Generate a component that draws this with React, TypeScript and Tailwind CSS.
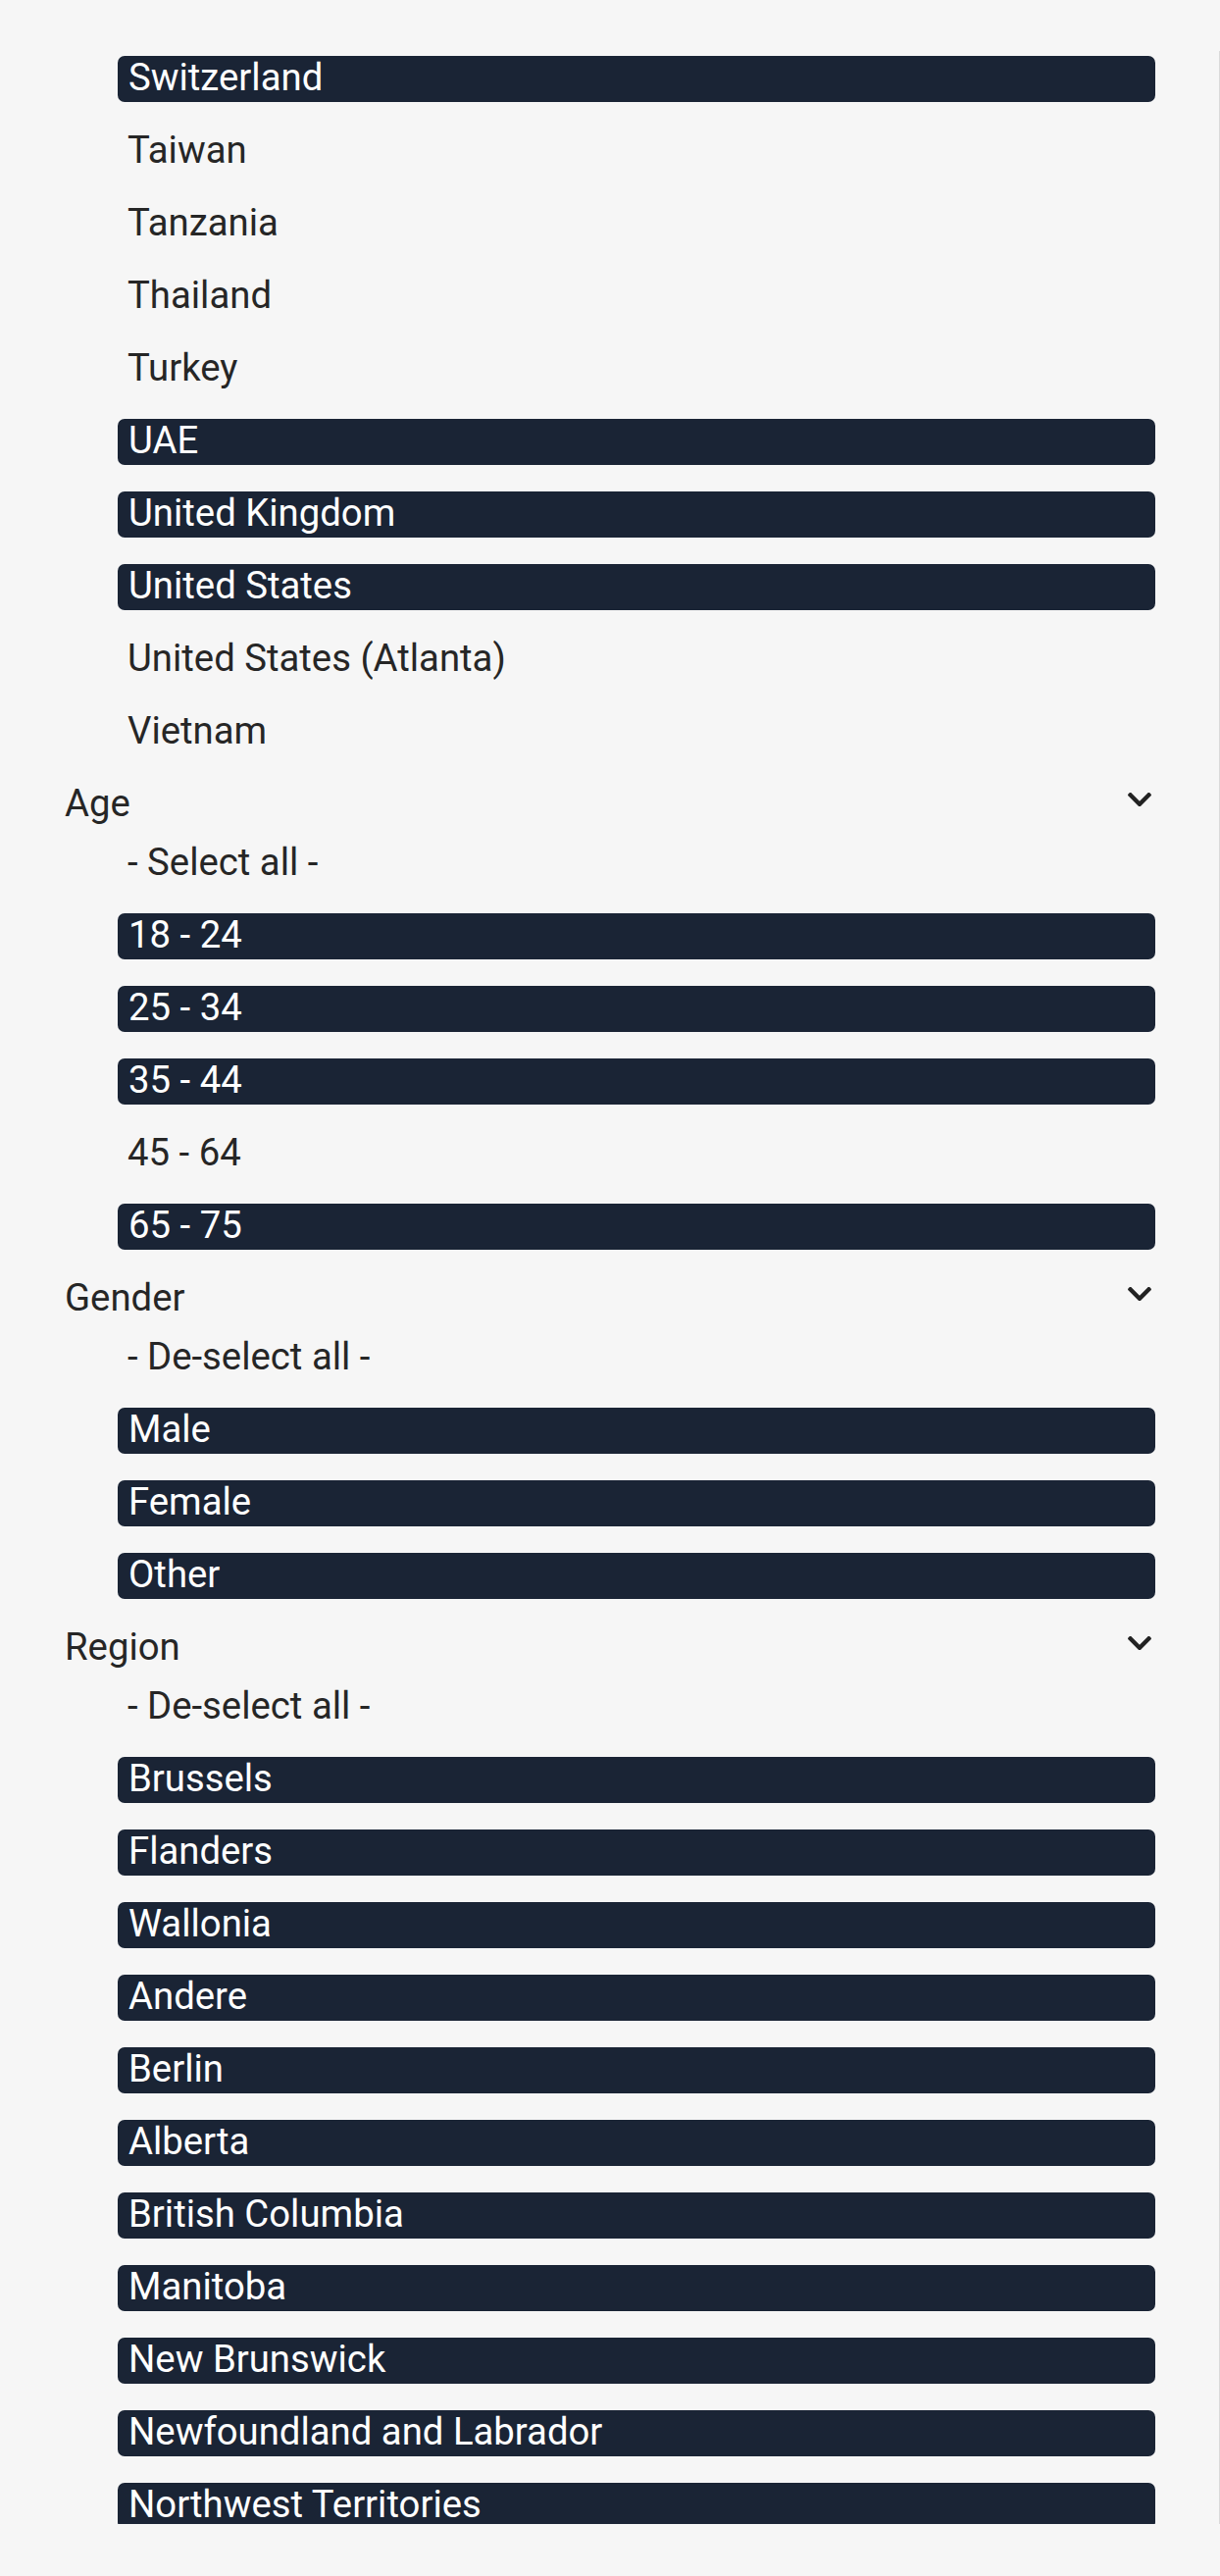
import React from "react";

interface Option {
  label: string;
  selected: boolean;
}

interface Group {
  title?: string;
  toggle?: string;
  options: Option[];
}

const groups: Group[] = [
  {
    options: [
      { label: "Switzerland", selected: true },
      { label: "Taiwan", selected: false },
      { label: "Tanzania", selected: false },
      { label: "Thailand", selected: false },
      { label: "Turkey", selected: false },
      { label: "UAE", selected: true },
      { label: "United Kingdom", selected: true },
      { label: "United States", selected: true },
      { label: "United States (Atlanta)", selected: false },
      { label: "Vietnam", selected: false },
    ],
  },
  {
    title: "Age",
    toggle: "- Select all -",
    options: [
      { label: "18 - 24", selected: true },
      { label: "25 - 34", selected: true },
      { label: "35 - 44", selected: true },
      { label: "45 - 64", selected: false },
      { label: "65 - 75", selected: true },
    ],
  },
  {
    title: "Gender",
    toggle: "- De-select all -",
    options: [
      { label: "Male", selected: true },
      { label: "Female", selected: true },
      { label: "Other", selected: true },
    ],
  },
  {
    title: "Region",
    toggle: "- De-select all -",
    options: [
      { label: "Brussels", selected: true },
      { label: "Flanders", selected: true },
      { label: "Wallonia", selected: true },
      { label: "Andere", selected: true },
      { label: "Berlin", selected: true },
      { label: "Alberta", selected: true },
      { label: "British Columbia", selected: true },
      { label: "Manitoba", selected: true },
      { label: "New Brunswick", selected: true },
      { label: "Newfoundland and Labrador", selected: true },
      { label: "Northwest Territories", selected: true },
    ],
  },
];

function ChevronDown() {
  return (
    <svg
      viewBox="5 127 438 262"
      className="w-[24px] h-[14.4px] mt-[11px]"
      fill="#222222"
    >
      <path d="M207.029 381.476L12.686 187.132c-9.373-9.373-9.373-24.569 0-33.941l22.667-22.667c9.357-9.357 24.522-9.375 33.901-.04L224 284.505l154.745-154.021c9.379-9.335 24.544-9.317 33.901.04l22.667 22.667c9.373 9.373 9.373 24.569 0 33.941L240.971 381.476c-9.373 9.372-24.569 9.372-33.942 0z" />
    </svg>
  );
}

function OptionRow({ option }: { option: Option }) {
  return (
    <li
      className={
        option.selected
          ? "ml-[120px] mr-[65px] mb-[27px] h-[47px] leading-[44px] px-[11px] rounded-[7px] bg-[#1a2435] text-white overflow-hidden"
          : "ml-[120px] mr-[65px] mb-[27px] h-[47px] leading-[44px] px-[10px] text-[#262626]"
      }
    >
      {option.label}
    </li>
  );
}

export default function App() {
  return (
    <div
      className="w-full h-[2626px] bg-[#f6f6f6] pt-[52px] text-[38.3px]"
      style={{ fontFamily: "Roboto, 'Noto Sans', sans-serif" }}
    >
      <div className="h-[2521px] overflow-hidden border-r border-[#dadada] pt-[5px]">
        {groups.map((group, i) => (
          <div key={i}>
            {group.title && (
              <div className="flex justify-between items-start pl-[66px] pr-[69px] h-[47px] leading-[44px] mb-[13px] text-[#262626]">
                <span>{group.title}</span>
                <ChevronDown />
              </div>
            )}
            <ul>
              {group.toggle && (
                <li className="ml-[120px] mr-[65px] mb-[27px] h-[47px] leading-[44px] px-[10px] text-[#262626]">
                  {group.toggle}
                </li>
              )}
              {group.options.map((option) => (
                <OptionRow key={option.label} option={option} />
              ))}
            </ul>
          </div>
        ))}
      </div>
    </div>
  );
}
